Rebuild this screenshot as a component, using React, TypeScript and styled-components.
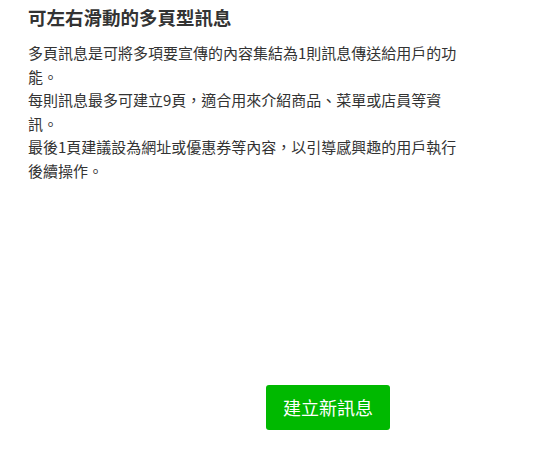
import React from "react";
import styled, { createGlobalStyle } from "styled-components";

const Global = createGlobalStyle`
  html, body { margin: 0; padding: 0; background: #fff; }
  body { font-family: "Noto Sans CJK TC", "Noto Sans", sans-serif; color: #333; }
`;

const Page = styled.div`
  width: 538px;
  height: 458px;
  box-sizing: border-box;
  padding: 5px 0 0 28px;
  display: flex;
  flex-direction: column;
`;

const Title = styled.h2`
  margin: 0;
  font-size: 18.5px;
  font-weight: 700;
  line-height: 24px;
  color: #333;
`;

const Body = styled.div`
  margin-top: 12px;
  width: 440px;
  font-size: 15px;
  line-height: 23.5px;
  color: #333;
`;

const Para = styled.p`
  margin: 0;
`;

const Footer = styled.div`
  margin-top: auto;
  padding: 0 0 28px 238px;
  display: flex;
`;

const Button = styled.button`
  width: 124px;
  height: 45px;
  border: none;
  border-radius: 3px;
  background: #00b900;
  color: #fff;
  font-family: "Noto Sans CJK TC", sans-serif;
  font-size: 18px;
  line-height: 45px;
  padding: 0;
  cursor: pointer;
`;

export default function App() {
  return (
    <>
      <Global />
      <Page>
        <Title>可左右滑動的多頁型訊息</Title>
        <Body>
          <Para>多頁訊息是可將多項要宣傳的內容集結為1則訊息傳送給用戶的功能。</Para>
          <Para>每則訊息最多可建立9頁，適合用來介紹商品、菜單或店員等資訊。</Para>
          <Para>最後1頁建議設為網址或優惠券等內容，以引導感興趣的用戶執行後續操作。</Para>
        </Body>
        <Footer>
          <Button>建立新訊息</Button>
        </Footer>
      </Page>
    </>
  );
}
